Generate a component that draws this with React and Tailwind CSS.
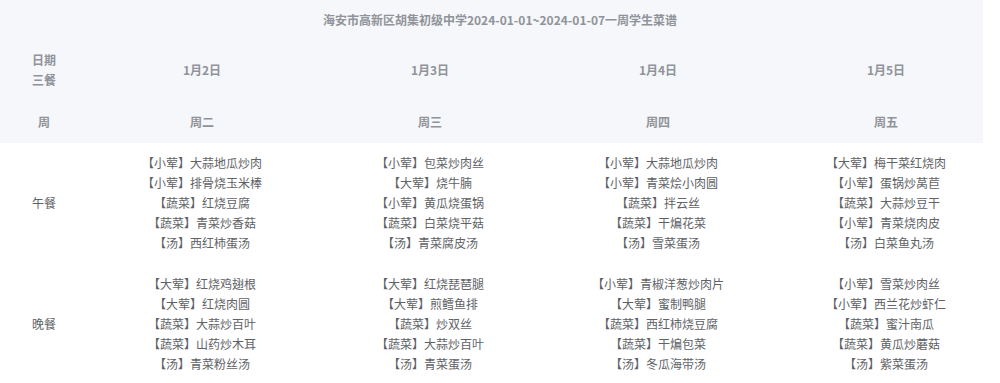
import React from "react";

const days = [
  { date: "1月2日", week: "周二" },
  { date: "1月3日", week: "周三" },
  { date: "1月4日", week: "周四" },
  { date: "1月5日", week: "周五" },
];

const meals = [
  {
    name: "午餐",
    dishes: [
      ["【小荤】大蒜地瓜炒肉", "【小荤】排骨烧玉米棒", "【蔬菜】红烧豆腐", "【蔬菜】青菜炒香菇", "【汤】西红柿蛋汤"],
      ["【小荤】包菜炒肉丝", "【大荤】烧牛腩", "【小荤】黄瓜烧蛋锅", "【蔬菜】白菜烧平菇", "【汤】青菜腐皮汤"],
      ["【小荤】大蒜地瓜炒肉", "【小荤】青菜烩小肉圆", "【蔬菜】拌云丝", "【蔬菜】干煸花菜", "【汤】雪菜蛋汤"],
      ["【大荤】梅干菜红烧肉", "【小荤】蛋锅炒莴苣", "【蔬菜】大蒜炒豆干", "【小荤】青菜烧肉皮", "【汤】白菜鱼丸汤"],
    ],
  },
  {
    name: "晚餐",
    dishes: [
      ["【大荤】红烧鸡翅根", "【大荤】红烧肉圆", "【蔬菜】大蒜炒百叶", "【蔬菜】山药炒木耳", "【汤】青菜粉丝汤"],
      ["【大荤】红烧琵琶腿", "【大荤】煎鳕鱼排", "【蔬菜】炒双丝", "【蔬菜】大蒜炒百叶", "【汤】青菜蛋汤"],
      ["【小荤】青椒洋葱炒肉片", "【大荤】蜜制鸭腿", "【蔬菜】西红柿烧豆腐", "【蔬菜】干煸包菜", "【汤】冬瓜海带汤"],
      ["【小荤】雪菜炒肉丝", "【小荤】西兰花炒虾仁", "【蔬菜】蜜汁南瓜", "【蔬菜】黄瓜炒蘑菇", "【汤】紫菜蛋汤"],
    ],
  },
];

export default function App() {
  return (
    <div
      className="w-[1000px] h-[383px] bg-white text-[12px] overflow-hidden"
      style={{ fontFamily: '"Noto Sans CJK SC", "Liberation Sans", sans-serif' }}
    >
      {/* Header */}
      <div className="bg-[linear-gradient(to_right,#f5f7fa_983px,#ffffff_983px)] text-[#909399] font-bold">
        <div className="h-[40px] flex items-center justify-center">
          海安市高新区胡集初级中学2024-01-01~2024-01-07一周学生菜谱
        </div>
        <div className="grid grid-cols-[88px_repeat(4,1fr)] h-[60px] items-center text-center">
          <div className="flex flex-col leading-[20px]">
            <span>日期</span>
            <span>三餐</span>
          </div>
          {days.map((d) => (
            <div key={d.date}>{d.date}</div>
          ))}
        </div>
        <div className="grid grid-cols-[88px_repeat(4,1fr)] h-[43px] items-center text-center">
          <div>周</div>
          {days.map((d) => (
            <div key={d.week}>{d.week}</div>
          ))}
        </div>
      </div>

      {/* Body */}
      {meals.map((m) => (
        <div
          key={m.name}
          className="grid grid-cols-[88px_repeat(4,1fr)] items-center text-center text-[#606266] pt-[10px] pb-[11px]"
        >
          <div>{m.name}</div>
          {m.dishes.map((list, i) => (
            <div key={i} className="flex flex-col leading-[20px]">
              {list.map((dish) => (
                <span key={dish}>{dish}</span>
              ))}
            </div>
          ))}
        </div>
      ))}
    </div>
  );
}
